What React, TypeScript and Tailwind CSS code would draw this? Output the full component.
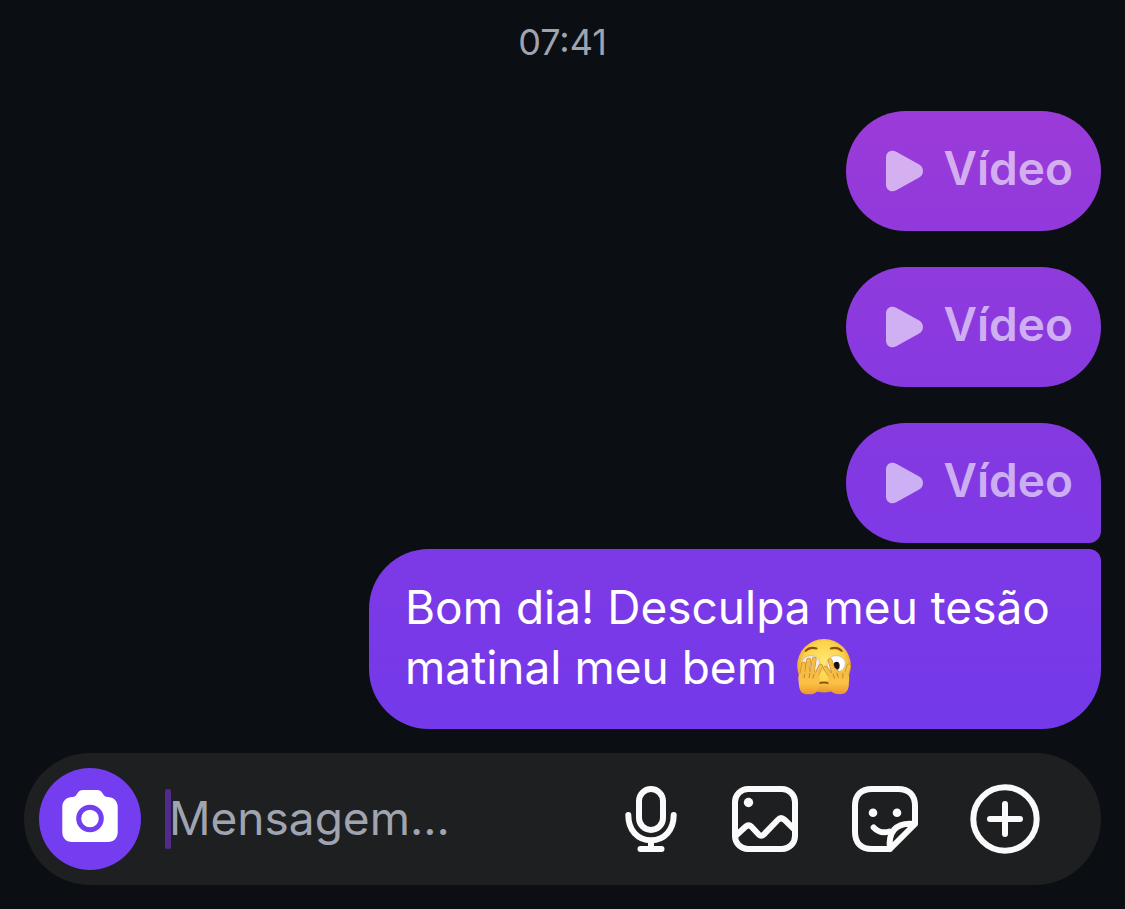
import React from "react";

function PlayIcon() {
  return (
    <svg viewBox="0 0 42 48" className="h-12 w-[42px] shrink-0" fill="currentColor" aria-hidden="true">
      <path d="M4 10.5C4 4.8 9.4 2 14.2 4.7L37.2 17.5C42.2 20.4 42.2 27.6 37.2 30.5L14.2 43.3C9.4 46 4 43.2 4 37.5Z" />
    </svg>
  );
}

function CameraIcon() {
  return (
    <svg viewBox="0 0 60 60" className="size-[60px]" aria-hidden="true">
      <path
        fill="#fff"
        d="M23 1H37C40 1 41.500 2.500 43 5C44.200 7 45.500 8 47.500 8C53.500 8 57.700 12 57.700 18V43C57.700 49 54 53 48 53H12C6 53 2.300 49 2.300 43V18C2.300 12 6.500 8 12.500 8C14.500 8 15.800 7 17 5C18.500 2.500 20 1 23 1Z"
      />
      <circle cx="30" cy="29.500" r="11.300" fill="none" stroke="#743df0" strokeWidth="5" />
    </svg>
  );
}

function MicIcon() {
  return (
    <svg viewBox="0 0 60 72" className="h-[72px] w-[60px]" fill="none" stroke="currentColor" strokeWidth="6" strokeLinecap="round" aria-hidden="true">
      <rect x="18" y="6" width="24" height="41" rx="12" />
      <path d="M7.300 32C7.300 47 16.500 57.300 30 57.300S52.700 47 52.700 32M30 57.300V66M19.500 66H40.500" />
    </svg>
  );
}

function ImageIcon() {
  return (
    <svg viewBox="0 0 72 72" className="size-[72px]" fill="none" stroke="currentColor" strokeWidth="6" strokeLinejoin="round" aria-hidden="true">
      <rect x="6" y="6" width="60" height="60" rx="13" />
      <circle cx="19.500" cy="19.500" r="4.700" fill="currentColor" stroke="none" />
      <path d="M7 52.500L16.500 43.800Q19.500 41 22.500 43.800L29.500 51.300Q32.300 54 35 51.300L48.500 37.200Q52 33.500 55.500 36.800L65.500 46.500" />
    </svg>
  );
}

function StickerIcon() {
  return (
    <svg viewBox="0 0 72 72" className="size-[72px]" fill="none" stroke="currentColor" strokeWidth="6" strokeLinecap="round" strokeLinejoin="round" aria-hidden="true">
      <path d="M41 66H23C12 66 6 60 6 49V23C6 12 12 6 23 6H49C60 6 66 12 66 23V41L41 66C39 50 46 38.500 66 41" />
      <path d="M24.700 44.500C28.500 48.500 34 50.500 40.500 48.500" />
      <circle cx="24" cy="29.700" r="4.300" fill="currentColor" stroke="none" />
      <circle cx="48" cy="29.700" r="4.300" fill="currentColor" stroke="none" />
    </svg>
  );
}

function PlusIcon() {
  return (
    <svg viewBox="0 0 72 72" className="size-[72px]" fill="none" stroke="currentColor" strokeWidth="6" strokeLinecap="round" aria-hidden="true">
      <circle cx="36" cy="36" r="31.700" />
      <path d="M36 21V51M21 36H51" />
    </svg>
  );
}

function PeekingFace() {
  return (
    <svg viewBox="0 0 162 165" role="img" aria-label="🫣" className="-mt-3 -mb-1 ml-1.5 inline-block size-14 align-middle">
      <defs>
        <radialGradient id="face" cx="50%" cy="42%" r="56%">
          <stop offset="0" stopColor="#ffe873" />
          <stop offset="0.650" stopColor="#fcd34a" />
          <stop offset="1" stopColor="#e9992b" />
        </radialGradient>
        <linearGradient id="hand" x1="0" y1="0" x2="0" y2="1">
          <stop offset="0" stopColor="#f4bc48" />
          <stop offset="0.500" stopColor="#fbc246" />
          <stop offset="1" stopColor="#eb982b" />
        </linearGradient>
      </defs>
      <circle cx="81" cy="79" r="79" fill="url(#face)" />
      <path d="M27 35Q39 22 59 28M101 28Q121 22 133 35" fill="none" stroke="#875019" strokeWidth="6" strokeLinecap="round" />
      <ellipse cx="42" cy="73" rx="27" ry="24" fill="#f0eee6" stroke="#b9b7ac" strokeWidth="2" />
      <ellipse cx="117" cy="73" rx="27" ry="24" fill="#fff" stroke="#b9b7ac" strokeWidth="2" />
      <ellipse cx="118" cy="79" rx="9" ry="12" fill="#18130f" />
      <path d="M62 131Q81 125 99 131" fill="none" stroke="#9a4d1c" strokeWidth="6" strokeLinecap="round" />
      <g fill="none" strokeLinecap="round">
        <path d="M17 105L21 74M31 98L36 62M46 98L52 60M58 110L71 80" stroke="#c77e20" strokeWidth="14" />
        <path d="M17 105L21 74M31 98L36 62M46 98L52 60M58 110L71 80" stroke="#f4bc48" strokeWidth="11" />
        <path d="M102 110L85 86M112 104L99 64M126 106L112 92M146 110L154 80" stroke="#c77e20" strokeWidth="14" />
        <path d="M102 110L85 86M112 104L99 64M126 106L112 92M146 110L154 80" stroke="#f4bc48" strokeWidth="11" />
      </g>
      <path d="M10 101C20 94 50 94 62 102C70 110 69 122 67 139C65 157 52 164 34 163C14 162 8 151 7 133C6 120 3 109 10 101Z" fill="url(#hand)" />
      <path d="M99 102C111 94 144 94 152 101C158 110 154 124 154 138C151 156 144 163 127 163C109 163 98 155 95 138C93 121 91 110 99 102Z" fill="url(#hand)" />
      <path d="M24 104L22 114M39 102L37 114M52 104L48 115M108 104L112 115M119 101L123 113M137 102L136 114" fill="none" stroke="#cc8526" strokeWidth="3" strokeLinecap="round" />
    </svg>
  );
}

function VideoBubble({ className }: { className: string }) {
  return (
    <button type="button" className={`flex h-[120px] items-center rounded-[60px] pr-7 pl-9 ${className}`}>
      <span className="flex items-center gap-5 text-white/60">
        <PlayIcon />
        <span className="pb-1.5 text-[46px] leading-[60px] font-semibold">Vídeo</span>
      </span>
    </button>
  );
}

export default function App() {
  return (
    <main className="flex min-h-screen flex-col bg-[#0b0e12] px-6 pt-5 pb-6 font-['Inter','Liberation_Sans',sans-serif]">
      <time className="self-center text-4xl leading-[44px] text-[#a0a4b0]">07:41</time>
      <section aria-label="Mensagens" className="mt-[47px] flex flex-col items-end">
        <div className="flex flex-col gap-9">
          <VideoBubble className="bg-linear-to-b from-[#9b3bd8] to-[#9139dc]" />
          <VideoBubble className="bg-linear-to-b from-[#8f3adc] to-[#8739e1]" />
          <VideoBubble className="rounded-br-xl bg-linear-to-b from-[#8539e0] to-[#7f39e6]" />
        </div>
        <p className="mt-1.5 w-[732px] max-w-full rounded-[60px] rounded-tr-xl bg-linear-to-b from-[#7e39e6] to-[#7339ea] px-9 pt-7 pb-8 text-[46px] leading-[60px] text-white">
          Bom dia! Desculpa meu tesão
          <br />
          matinal meu bem <PeekingFace />
        </p>
      </section>
      <form className="mt-6 flex h-[132px] items-center rounded-full bg-[#1e1f21] pr-[60px] pl-[15px] text-[#fafafa]" onSubmit={(e) => e.preventDefault()}>
        <button type="button" aria-label="Câmera" className="flex size-[102px] shrink-0 items-center justify-center rounded-full bg-[#743df0]">
          <CameraIcon />
        </button>
        <span className="ml-6 h-[60px] w-1.5 shrink-0 rounded-xs bg-[#512a8c]" />
        <input
          type="text"
          aria-label="Mensagem"
          placeholder="Mensagem..."
          className="-ml-0.5 h-[60px] min-w-0 flex-1 bg-transparent pb-0.5 text-[46px] caret-transparent outline-none placeholder:text-[#a0a4b0]"
        />
        <div className="flex shrink-0 items-center gap-12">
          <button type="button" aria-label="Gravar áudio"><MicIcon /></button>
          <button type="button" aria-label="Galeria"><ImageIcon /></button>
          <button type="button" aria-label="Figurinhas"><StickerIcon /></button>
          <button type="button" aria-label="Mais opções"><PlusIcon /></button>
        </div>
      </form>
    </main>
  );
}
